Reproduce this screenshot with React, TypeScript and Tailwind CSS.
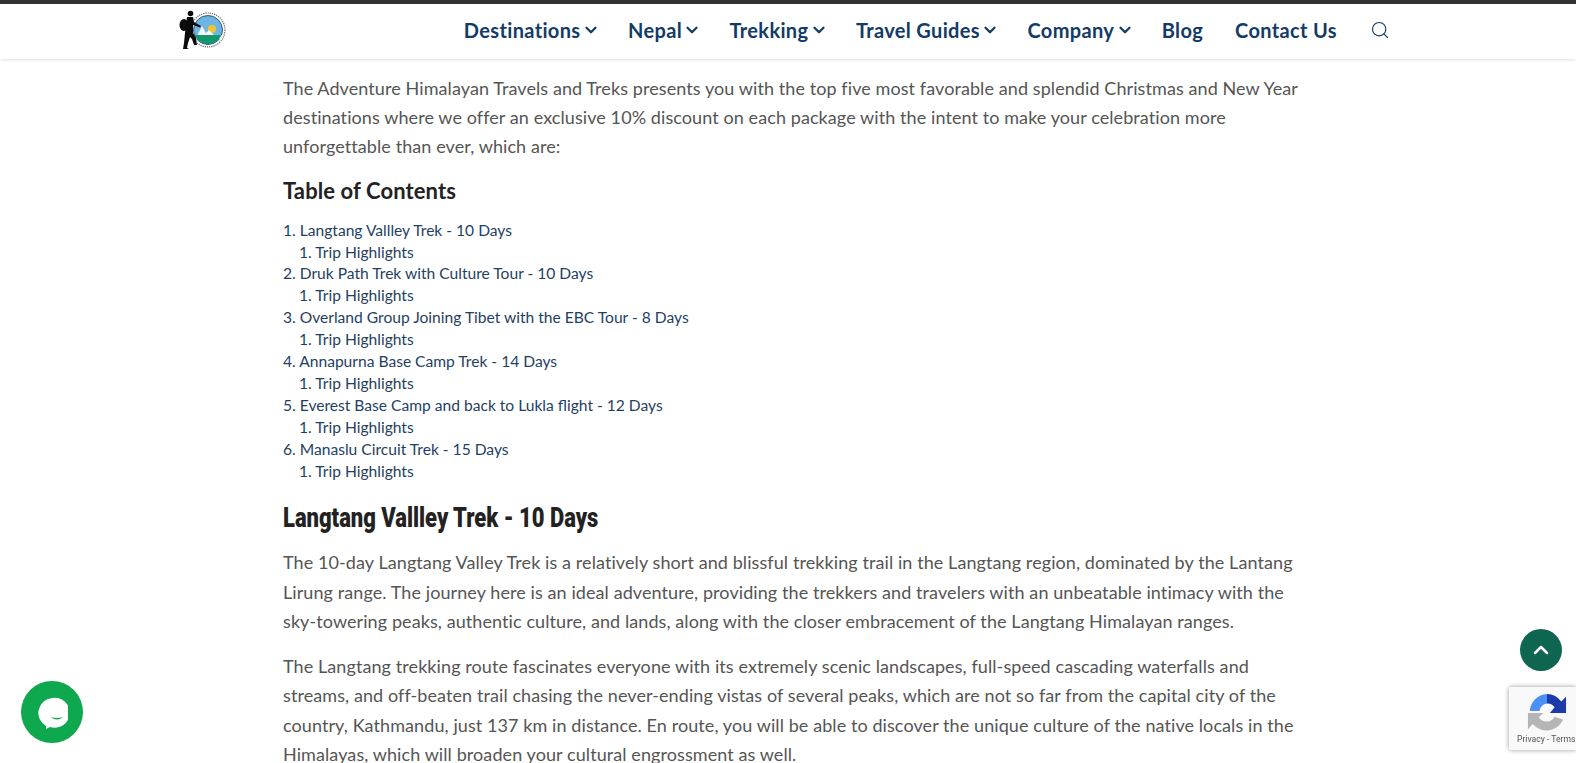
import { ChevronDown, ChevronUp, Search } from "lucide-react";

const navItems = [
  { label: "Destinations", caret: true },
  { label: "Nepal", caret: true },
  { label: "Trekking", caret: true },
  { label: "Travel Guides", caret: true },
  { label: "Company", caret: true },
  { label: "Blog", caret: false },
  { label: "Contact Us", caret: false },
];

const toc = [
  "Langtang Vallley Trek - 10 Days",
  "Druk Path Trek with Culture Tour - 10 Days",
  "Overland Group Joining Tibet with the EBC Tour - 8 Days",
  "Annapurna Base Camp Trek - 14 Days",
  "Everest Base Camp and back to Lukla flight - 12 Days",
  "Manaslu Circuit Trek - 15 Days",
];

function Logo() {
  return (
    <svg width="48" height="46" viewBox="0 0 48 46" aria-label="logo">
      <circle cx="30" cy="23" r="17" fill="#fff" stroke="#666" strokeWidth="1.2" strokeDasharray="1.2 1" />
      <circle cx="30" cy="23" r="14.500" fill="#6db5e2" stroke="#1d3a5c" strokeWidth="0.8" />
      <circle cx="34" cy="22" r="4" fill="#f2c433" />
      <path d="M18 31 L24 19 L28 26 L31 23 L36 28 L44 28 L44 32 L18 32Z" fill="#f4f6f6" />
      <path d="M16.500 28 H43.500 A14.500 14.500 0 0 1 16.500 28Z" fill="#14966f" />
      <ellipse cx="6" cy="18" rx="4.500" ry="6" fill="#0b0b0b" />
      <circle cx="12.500" cy="6.500" r="2.800" fill="#0b0b0b" />
      <path d="M9 10 L15 10 L16 15 L23 19 L22 20.500 L15 18 L15 26 L18 31 L19 38 L16 38 L14 32 L12 30 L10 36 L9 41 L11 42 L5 42 L6 36 L7 26 Z" fill="#0b0b0b" />
    </svg>
  );
}

function Recaptcha() {
  return (
    <svg width="40" height="40" viewBox="0 0 42 42">
      <path d="M21 2 A19 19 0 0 0 3 20 H13 A9 9 0 0 1 21 12 Z" fill="#4a90f5" />
      <path d="M21 2 A19 19 0 0 1 36 10 L41 5 V22 H24 L29 16 A9 9 0 0 0 21 12 Z" fill="#1c3aa9" />
      <path d="M1 22 H17 L12.500 26.500 A9.500 9.500 0 0 0 29 26 L38 29 A19 19 0 0 1 6 33.500 L1 39 Z" fill="#b5b5b5" />
    </svg>
  );
}

export default function App() {
  return (
    <div className="h-[763px] overflow-hidden bg-white font-['Lato',sans-serif] text-[#555]">
      <header className="h-[59px] border-t-4 border-[#333] bg-white shadow-[0_1px_3px_rgba(0,0,0,0.12)]">
        <div className="flex h-[52px] items-center pr-[186px] pl-[178px]">
          <Logo />
          <nav className="ml-auto flex items-center text-[20px] font-bold tracking-[0.35px] text-[#123b66]">
            {navItems.map((item) => (
              <a key={item.label} className="mr-[32px] flex items-center">
                {item.label}
                {item.caret && <ChevronDown size={18} strokeWidth={3} className="mr-[-4px] ml-[1.5px]" />}
              </a>
            ))}
            <Search size={20} strokeWidth={1.4} className="ml-[1px]" />
          </nav>
        </div>
      </header>

      <main className="ml-[283px] w-[1024px] pt-[15px]">
        <p className="text-[18px] leading-[29.2px] tracking-[0.085px]">
          The Adventure Himalayan Travels and Treks presents you with the top five most favorable and splendid Christmas
          and New Year destinations where we offer an exclusive 10% discount on each package with the intent to make your
          celebration more unforgettable than ever, which are:
        </p>

        <h3 className="mt-[14px] text-[22px] leading-[30px] font-bold tracking-[0.1px] text-[#222]">Table of Contents</h3>

        <ol className="mt-[14px] text-[15.6px] leading-[21.9px] text-[#1f3f63]">
          {toc.map((title, i) => (
            <li key={title}>
              <div>{i + 1}. {title}</div>
              <div className="pl-[16px]">1. Trip Highlights</div>
            </li>
          ))}
        </ol>

        <h2 className="mt-[18px] origin-left scale-x-[0.813] font-['Roboto',sans-serif] text-[27px] leading-[36px] font-black whitespace-nowrap text-[#222]">
          Langtang Vallley Trek - 10 Days
        </h2>

        <p className="mt-[12px] text-[18px] leading-[29.2px] tracking-[0.085px]">
          The 10-day Langtang Valley Trek is a relatively short and blissful trekking trail in the Langtang region,
          dominated by the Lantang Lirung range. The journey here is an ideal adventure, providing the trekkers and
          travelers with an unbeatable intimacy with the sky-towering peaks, authentic culture, and lands, along with the
          closer embracement of the Langtang Himalayan ranges.
        </p>

        <p className="mt-[16px] text-[18px] leading-[29.2px] tracking-[0.085px]">
          The Langtang trekking route fascinates everyone with its extremely scenic landscapes, full-speed cascading
          waterfalls and streams, and off-beaten trail chasing the never-ending vistas of several peaks, which are not so
          far from the capital city of the country, Kathmandu, just 137 km in distance. En route, you will be able to
          discover the unique culture of the native locals in the Himalayas, which will broaden your cultural engrossment
          as well.
        </p>
      </main>

      <button className="fixed right-[14px] bottom-[92px] flex h-[42px] w-[42px] items-center justify-center rounded-full bg-[#0f6650] text-white">
        <ChevronUp size={24} strokeWidth={2.5} />
      </button>

      <button className="fixed bottom-[20px] left-[21px] flex h-[62px] w-[62px] items-center justify-center rounded-full bg-[#0ea84f]">
        <svg width="32" height="36" viewBox="0 0 32 36">
          <path d="M16 4 A15 15 0 1 1 14 33 L10 35 L10 32 A15 15 0 0 1 16 4Z" fill="#fff" />
          <path d="M15 23 Q21 25 27 23 Q21 28 15 23Z" fill="#0ea84f" />
        </svg>
      </button>

      <div className="fixed right-0 bottom-[13px] flex h-[63px] w-[67px] flex-col items-start overflow-hidden rounded-l-[2px] bg-[#f9f9f9] pt-[5px] pl-[8px] shadow-[0_0_5px_rgba(0,0,0,0.4)]">
        <div className="ml-[10px]"><Recaptcha /></div>
        <div className="mt-[1px] font-['Roboto',sans-serif] text-[8.6px] leading-[12px] whitespace-nowrap text-[#555]">Privacy - Terms</div>
      </div>
    </div>
  );
}
